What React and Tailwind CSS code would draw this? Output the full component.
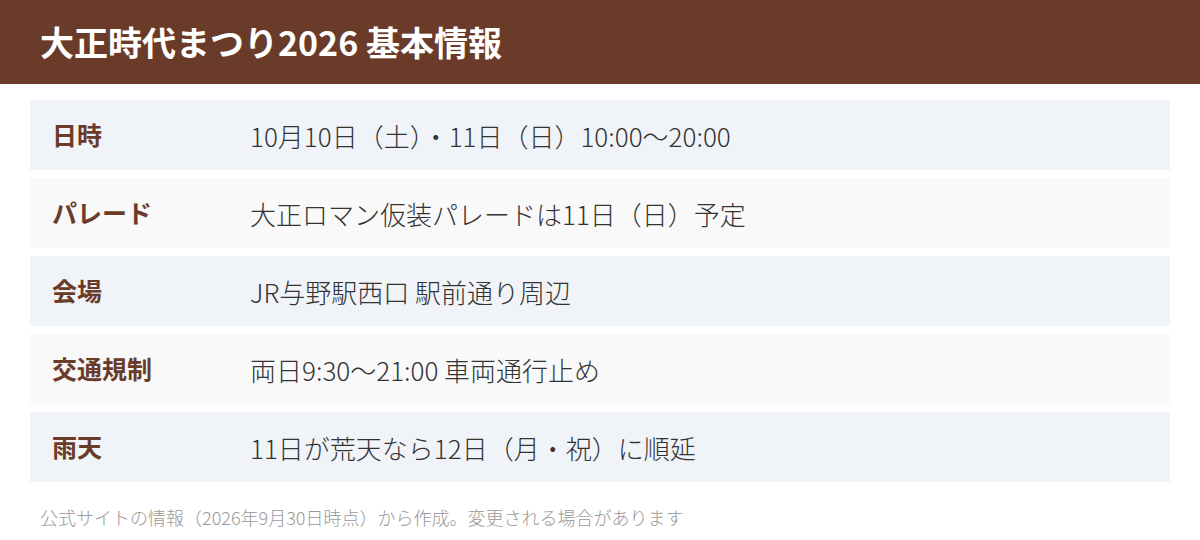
const rows = [
  { label: "日時", value: "10月10日（土）・11日（日）10:00〜20:00" },
  { label: "パレード", value: "大正ロマン仮装パレードは11日（日）予定" },
  { label: "会場", value: "JR与野駅西口 駅前通り周辺" },
  { label: "交通規制", value: "両日9:30〜21:00 車両通行止め" },
  { label: "雨天", value: "11日が荒天なら12日（月・祝）に順延" },
];

export default function App() {
  return (
    <div className="w-[1200px] h-[540px] bg-white font-['Noto_Sans_CJK_JP',sans-serif] overflow-hidden">
      {/* ヘッダー */}
      <header className="h-[84px] bg-[#6b3b2a] flex items-center px-10">
        <h1 className="text-[34px] font-bold text-white leading-none">
          大正時代まつり2026 基本情報
        </h1>
      </header>

      {/* 情報テーブル */}
      <main className="px-[30px] pt-4 flex flex-col gap-2">
        {rows.map((row, i) => (
          <div
            key={row.label}
            className={`h-[70px] flex items-center ${i % 2 === 0 ? "bg-[#f0f4f8]" : "bg-[#f9f9f9]"}`}
          >
            <div className="w-[220px] pl-[22px] text-[25px] font-bold text-[#6b3b2a]">
              {row.label}
            </div>
            <div className="text-[26px] font-light text-[#333333]">{row.value}</div>
          </div>
        ))}
      </main>

      {/* 注記 */}
      <footer className="px-10 pt-[22px] text-[18px] font-light text-[#999999]">
        公式サイトの情報（2026年9月30日時点）から作成。変更される場合があります
      </footer>
    </div>
  );
}
